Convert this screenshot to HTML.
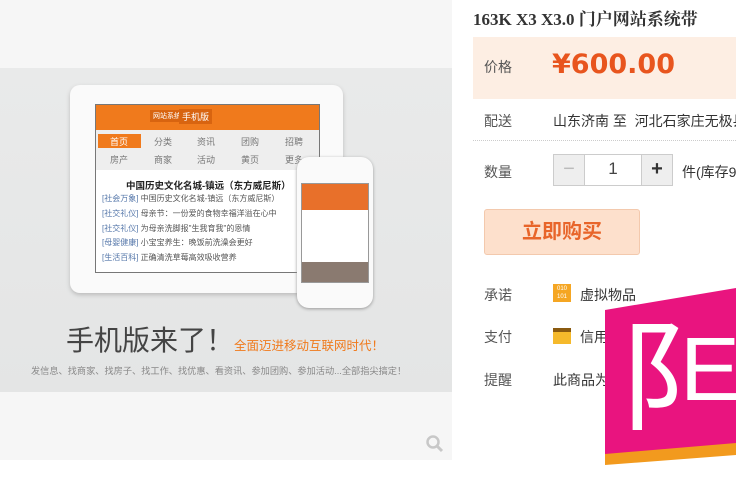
<!DOCTYPE html><html><head><meta charset="utf-8"><style>
*{margin:0;padding:0;box-sizing:border-box}
body{width:736px;height:493px;background:#fff;position:relative;overflow:hidden;font-family:"Liberation Sans","Noto Sans CJK SC",sans-serif;color:#333}
.a{position:absolute}
.lab{position:absolute;left:484px;font-size:14px;color:#555}
.val{position:absolute;left:553px;font-size:14px;color:#333}
.n{position:absolute;font-size:9px;color:#777;width:40px;text-align:center}
</style></head><body>
<div class="a" style="left:0;top:0;width:452px;height:460px;background:#f6f6f6"></div>
<div class="a" style="left:0;top:68px;width:452px;height:324px;background:linear-gradient(#e9eaea,#e4e5e5)"></div>
<div class="a" style="left:70px;top:85px;width:273px;height:208px;background:#fafafa;border-radius:10px;box-shadow:0 2px 4px #bbb"></div>
<div class="a" style="left:95px;top:104px;width:225px;height:169px;background:#fff;border:1px solid #777"></div>
<div class="a" style="left:96px;top:105px;width:223px;height:25px;background:#f07a1c"></div>
<div class="a" style="left:150px;top:110px;font-size:7px;color:#fff;background:#d86410;padding:1px 3px">网站系统</div>
<div class="a" style="left:179px;top:109px;font-size:9px;color:#fff;background:#d86410;padding:1px 3px">手机版</div>
<div class="a" style="left:96px;top:130px;width:223px;height:40px;background:#eeeeee"></div>
<div class="a" style="left:98px;top:134px;width:43px;height:14px;background:#f07a1c"></div>
<div class="n" style="left:99px;top:135px;color:#fff">首页</div>
<div class="n" style="left:143px;top:135px">分类</div><div class="n" style="left:186px;top:135px">资讯</div><div class="n" style="left:230px;top:135px">团购</div><div class="n" style="left:274px;top:135px">招聘</div>
<div class="n" style="left:99px;top:153px">房产</div><div class="n" style="left:143px;top:153px">商家</div><div class="n" style="left:186px;top:153px">活动</div><div class="n" style="left:230px;top:153px">黄页</div><div class="n" style="left:274px;top:153px">更多</div>
<div class="a" style="left:126px;top:178px;font-size:9.5px;font-weight:bold;color:#222">中国历史文化名城-镇远（东方威尼斯）</div>
<div class="a" style="left:102px;top:192px;font-size:8px;line-height:14.8px;color:#555"><span style="color:#57a">[社会万象]</span> 中国历史文化名城-镇远（东方威尼斯）<br><span style="color:#57a">[社交礼仪]</span> 母亲节：一份爱的食物幸福洋溢在心中<br><span style="color:#57a">[社交礼仪]</span> 为母亲洗脚报"生我育我"的恩情<br><span style="color:#57a">[母婴健康]</span> 小宝宝养生：晚饭前洗澡会更好<br><span style="color:#57a">[生活百科]</span> 正确清洗草莓高效吸收营养</div>
<div class="a" style="left:297px;top:157px;width:76px;height:151px;background:#fafafa;border-radius:12px;box-shadow:0 1px 3px #999"></div>
<div class="a" style="left:301px;top:183px;width:68px;height:100px;background:#fff;border:1px solid #999"></div>
<div class="a" style="left:302px;top:184px;width:66px;height:26px;background:#e8702a"></div>
<div class="a" style="left:302px;top:262px;width:66px;height:20px;background:#8a7a70"></div>
<div class="a" style="left:66px;top:319px;font-size:28px;color:#444;white-space:nowrap">手机版来了！<span style="font-size:12.5px;color:#f07a1c">全面迈进移动互联网时代！</span></div>
<div class="a" style="left:31px;top:363px;font-size:9.2px;color:#888;white-space:nowrap">发信息、找商家、找房子、找工作、找优惠、看资讯、参加团购、参加活动...全部指尖搞定！</div>
<svg class="a" style="left:425px;top:434px" width="20" height="20"><circle cx="8" cy="8" r="5.5" fill="none" stroke="#c8c8c8" stroke-width="2.5"/><path d="M12 12l5 5" stroke="#c8c8c8" stroke-width="3"/></svg>
<div class="a" style="left:473px;top:5px;font-size:17px;font-weight:bold;color:#333;white-space:nowrap;font-family:'Liberation Serif','Noto Serif CJK SC',serif">163K X3 X3.0 门户网站系统带</div>
<div class="a" style="left:473px;top:37px;width:263px;height:62px;background:#fdeee3"></div>
<div class="lab" style="top:57px">价格</div>
<div class="a" style="left:552px;top:49px;font-size:27px;font-weight:bold;color:#e8551e;font-family:'DejaVu Sans',sans-serif">¥600.00</div>
<div class="lab" style="top:111px">配送</div>
<div class="val" style="top:111px;white-space:nowrap">山东济南 至&nbsp; 河北石家庄无极县</div>
<div class="a" style="left:473px;top:140px;width:263px;border-top:1px dotted #ccc"></div>
<div class="lab" style="top:162px">数量</div>
<div class="a" style="left:553px;top:154px;width:120px;height:32px;border:1px solid #ccc;background:#fff"></div>
<div class="a" style="left:554px;top:155px;width:31px;height:30px;background:#eee;border-right:1px solid #ccc;color:#bbb;font-size:20px;text-align:center;line-height:28px">−</div>
<div class="a" style="left:641px;top:155px;width:31px;height:30px;background:#eee;border-left:1px solid #ccc;color:#333;font-size:20px;font-weight:bold;text-align:center;line-height:28px">+</div>
<div class="a" style="left:585px;top:159px;width:56px;text-align:center;font-size:17px;color:#444">1</div>
<div class="val" style="left:682px;top:162px;white-space:nowrap">件(库存99</div>
<div class="a" style="left:484px;top:209px;width:156px;height:46px;background:#fde0cc;border:1px solid #f3c9ad;border-radius:3px;text-align:center;line-height:44px;font-size:20px;font-weight:bold;color:#e8652a">立即购买</div>
<div class="lab" style="top:285px">承诺</div>
<div class="a" style="left:553px;top:284px;width:18px;height:18px;background:#f5a623;color:#fff;font-size:6px;line-height:8px;text-align:center;padding-top:1px">010<br>101</div>
<div class="val" style="left:580px;top:285px">虚拟物品</div>
<div class="lab" style="top:327px">支付</div>
<div class="a" style="left:553px;top:328px;width:18px;height:16px;background:#f5b92b;border-top:4px solid #8a5a10"></div>
<div class="val" style="left:580px;top:327px">信用</div>
<div class="lab" style="top:370px">提醒</div>
<div class="val" style="top:370px">此商品为</div>
<svg class="a" style="left:600px;top:280px" width="136" height="190"><polygon points="5,40 136,15 136,175 5,185" fill="#f29a1e"/><polygon points="5,30 136,8 136,163 5,174" fill="#e9147f"/><text x="18" y="140" font-size="120" fill="#fff" font-family="Liberation Sans,Noto Sans CJK SC,sans-serif">阝</text><text x="80" y="120" font-size="90" fill="#fff" font-family="Liberation Sans,Noto Sans CJK SC,sans-serif">E</text></svg>
</body></html>
